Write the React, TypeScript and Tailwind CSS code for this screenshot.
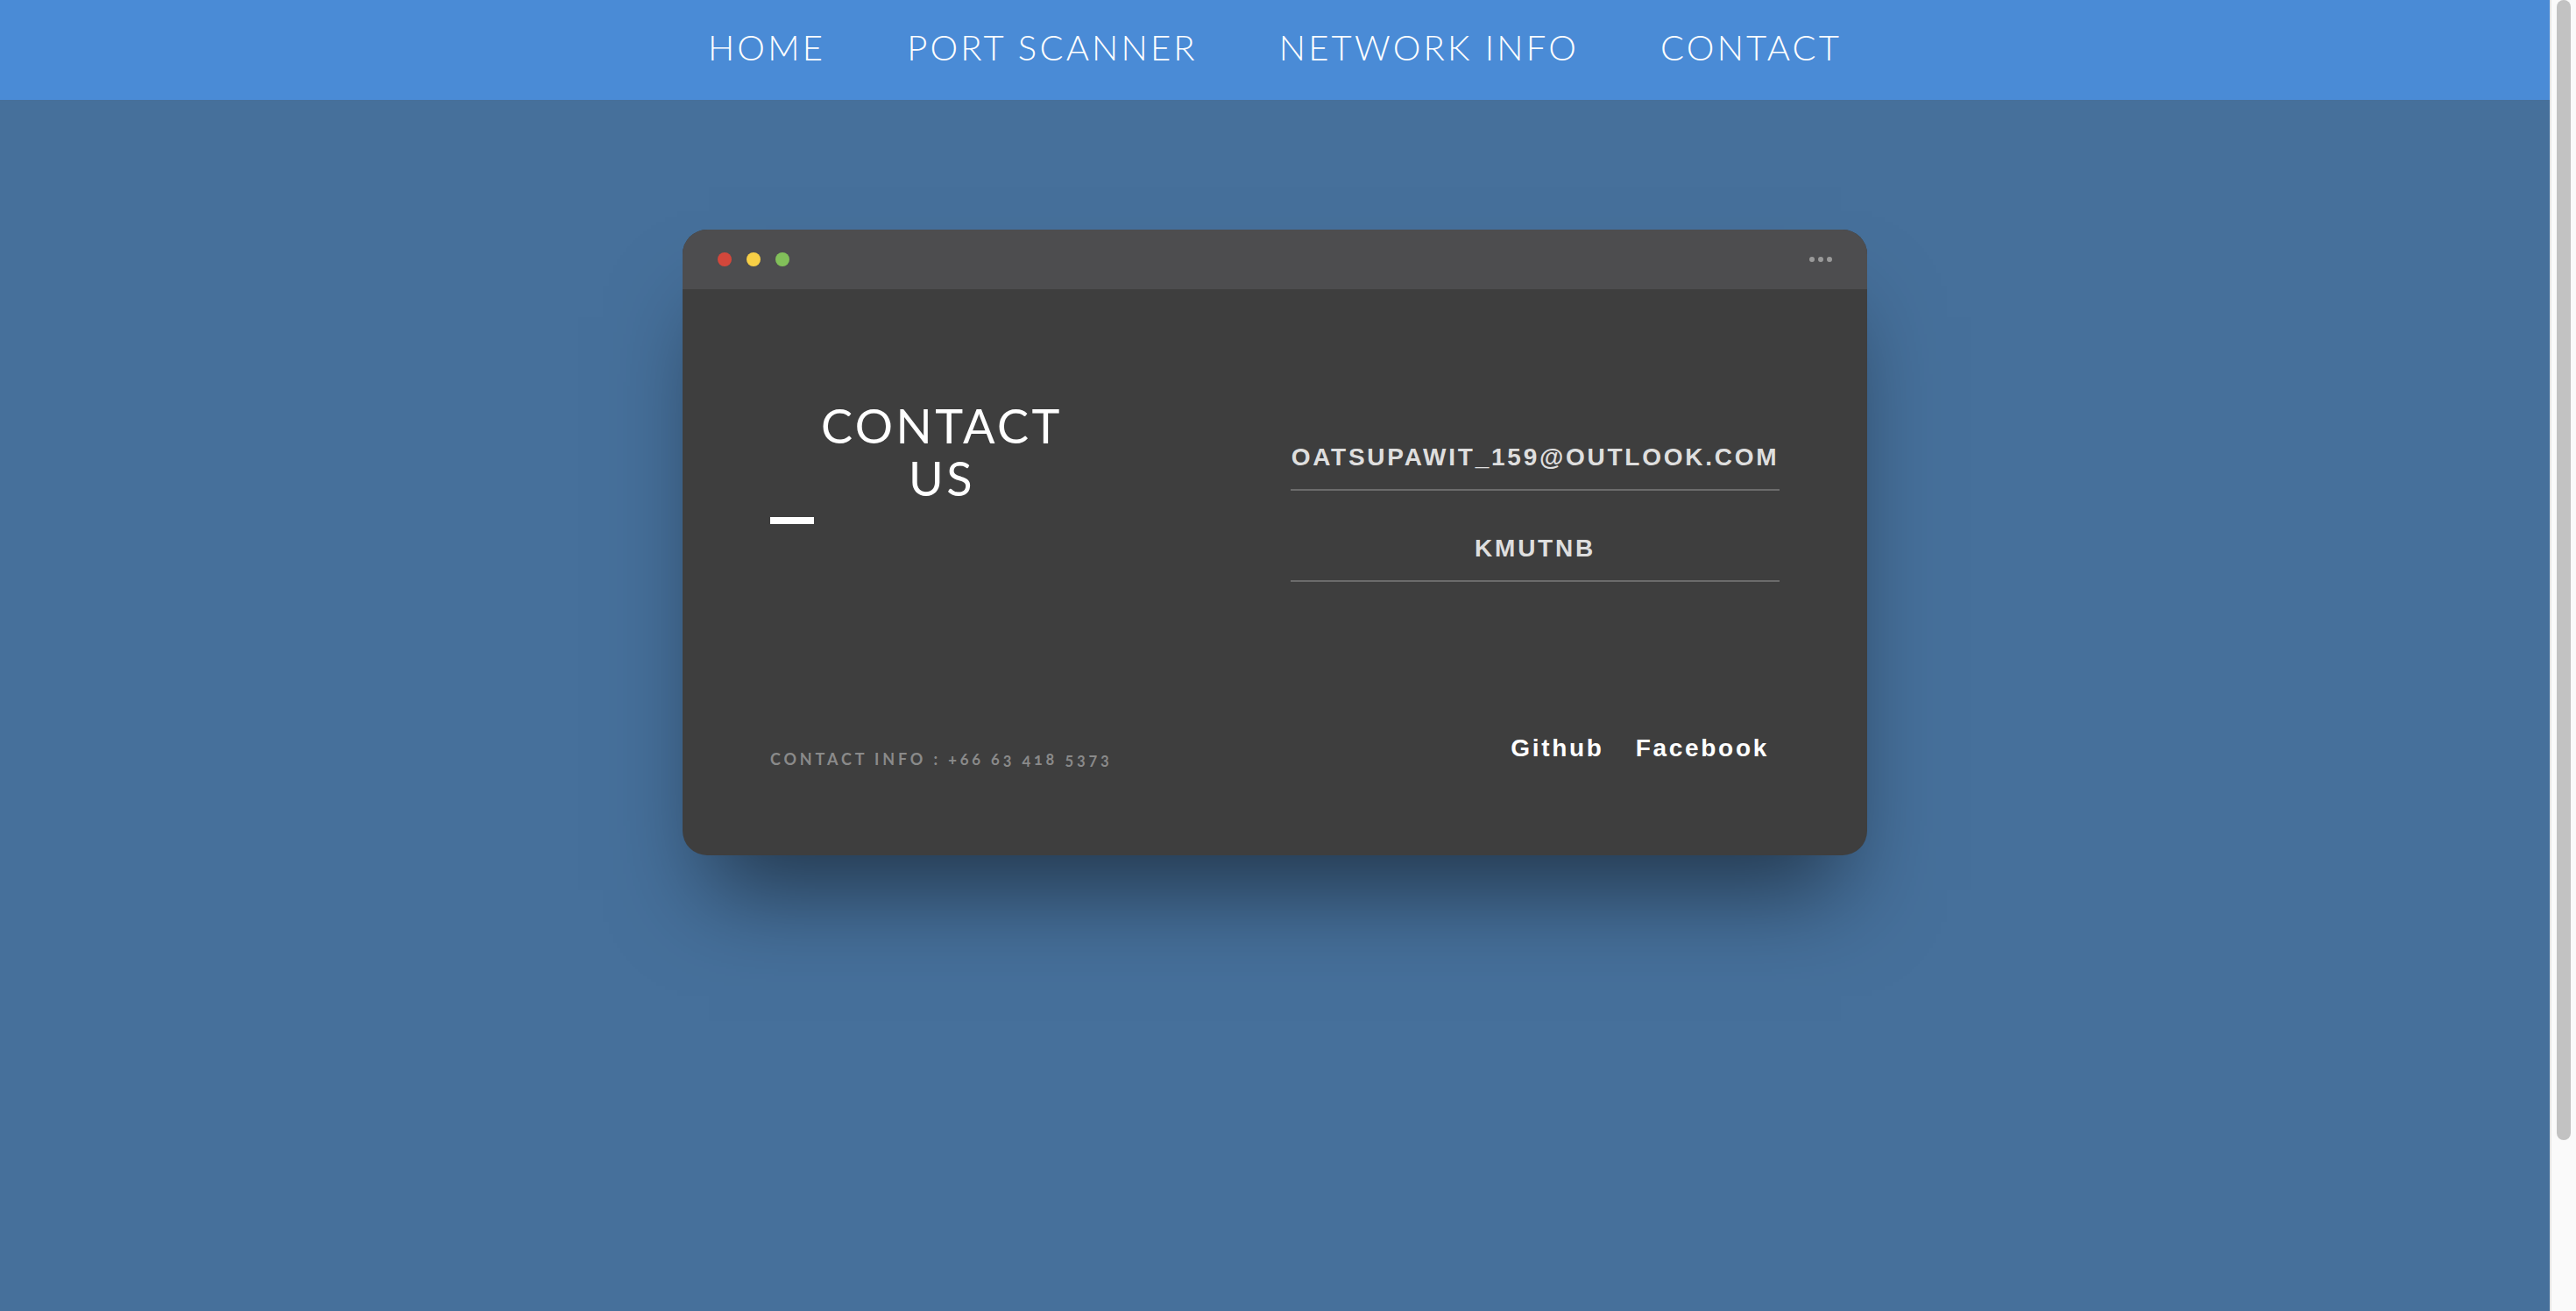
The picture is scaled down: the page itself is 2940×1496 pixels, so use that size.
import React from "react";

const navItems = ["HOME", "PORT SCANNER", "NETWORK INFO", "CONTACT"];

export default function App() {
  return (
    <div className="h-screen overflow-hidden flex bg-[#46709b]">
      <div className="flex-1 min-w-0 flex flex-col">
        <nav className="h-[114px] shrink-0 bg-[#4a8bd6] flex items-start justify-center pt-[34px] gap-[93px] font-['Lato',sans-serif] font-light text-[40px] leading-[40px] tracking-[3.2px] text-white">
          {navItems.map((n) => (
            <span key={n}>{n}</span>
          ))}
        </nav>

        <div className="mt-[148px] mx-auto w-[1352px] h-[714px] shrink-0 rounded-[28px] bg-[#3e3e3e] overflow-hidden shadow-[0_70px_100px_-30px_rgba(0,0,0,0.5)] flex flex-col">
          <div className="h-[68px] shrink-0 bg-[#4d4d4f] flex items-center justify-between px-[40px]">
            <div className="flex gap-[17px]">
              <span className="w-[16px] h-[16px] rounded-full bg-[#d3473b]" />
              <span className="w-[16px] h-[16px] rounded-full bg-[#f7cf46]" />
              <span className="w-[16px] h-[16px] rounded-full bg-[#82c05a]" />
            </div>
            <div className="flex gap-[4px]">
              <span className="w-[6px] h-[6px] rounded-full bg-[#9a9a9a]" />
              <span className="w-[6px] h-[6px] rounded-full bg-[#9a9a9a]" />
              <span className="w-[6px] h-[6px] rounded-full bg-[#9a9a9a]" />
            </div>
          </div>

          <div className="flex-1 flex justify-between pl-[100px] pr-[100px]">
            <div className="flex flex-col">
              <h1 className="mt-[126px] w-[392px] text-center font-['Lato',sans-serif] font-normal text-[54px] leading-[60px] tracking-[3.5px] text-white">
                CONTACT
                <br />
                US
              </h1>
              <div className="mt-[14px] w-[50px] h-[8px] bg-white" />
              <p className="mt-[259px] font-['Lato',sans-serif] font-bold text-[18px] leading-[18px] tracking-[3.85px] text-[#8a8a8a] oldstyle-nums">
                CONTACT INFO : +66 63 418 5373
              </p>
            </div>

            <div className="w-[558px] flex flex-col font-['Liberation_Sans',Arial,sans-serif] font-bold">
              <div className="mt-[178px] pb-[22px] border-b-2 border-[#6b6b6b] text-center text-[28px] leading-[28px] tracking-[2.75px] text-[#dedede]">
                OATSUPAWIT_159@OUTLOOK.COM
              </div>
              <div className="mt-[52px] pb-[22px] border-b-2 border-[#6b6b6b] text-center text-[28px] leading-[28px] tracking-[2.75px] text-[#dedede]">
                KMUTNB
              </div>
              <div className="mt-[176px] flex justify-end gap-[36px] pr-[12px] text-[28px] leading-[28px] tracking-[2.7px] text-white">
                <span>Github</span>
                <span>Facebook</span>
              </div>
            </div>
          </div>
        </div>
      </div>

      <div className="w-[30px] shrink-0 h-full bg-[#fafafa] border-l-2 border-[#e6e6e6] pl-[6px]">
        <div className="w-[16px] h-[1301px] rounded-full bg-[#c2c2c2]" />
      </div>
    </div>
  );
}
